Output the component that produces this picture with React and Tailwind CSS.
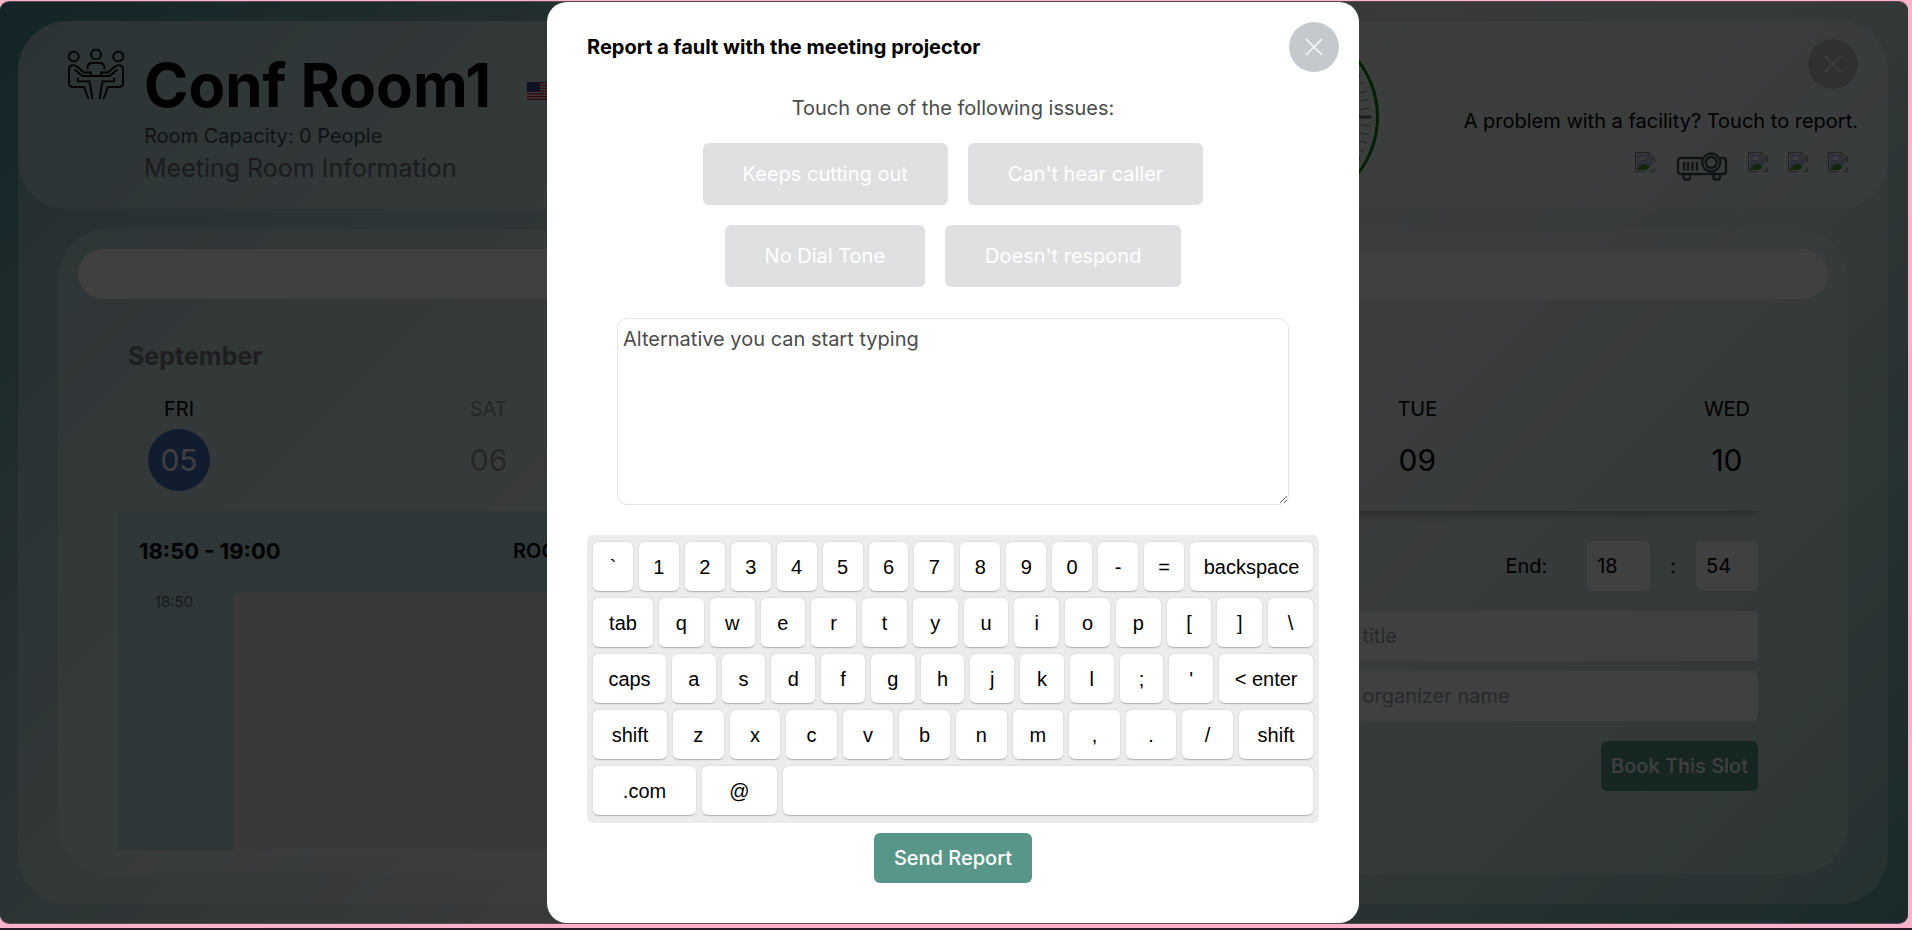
import React from "react";

const DAYS = [
  { name: "FRI", date: "05", state: "selected" },
  { name: "SAT", date: "06", state: "muted" },
  { name: "SUN", date: "07", state: "muted" },
  { name: "MON", date: "08", state: "normal" },
  { name: "TUE", date: "09", state: "normal" },
  { name: "WED", date: "10", state: "normal" },
];

const ISSUES = ["Keeps cutting out", "Can't hear caller", "No Dial Tone", "Doesn't respond"];

const KEY_ROWS = [
  [..."`1234567890-=", ["backspace", "w-[123px]"]],
  [["tab", "w-[60px]"], ..."qwertyuiop[]\\"],
  [["caps", "w-[73px]"], ..."asdfghjkl;'", ["< enter", "w-[94px]"]],
  [["shift", "w-[74px]"], ..."zxcvbnm,./", ["shift", "w-[74px]"]],
  [[".com", "w-[103px]"], ["@", "w-[75px]"], " "],
];

function MeetingIcon() {
  return (
    <svg width="56" height="51" viewBox="0 0 56 51" fill="none" stroke="black" strokeWidth="1.8" className="shrink-0" aria-hidden="true">
      <circle cx="5.8" cy="7.5" r="4.900" />
      <circle cx="28" cy="5.5" r="4.900" />
      <circle cx="50.2" cy="7.5" r="4.900" />
      <path d="M19.500 20.500V19C19.500 16 21.500 14 24.500 14H31.500C34.500 14 36.500 16 36.500 19V20.500" />
      <path d="M6.500 20.500L14.500 27H41.500L49.500 20.500" />
      <path d="M23 27V23.500H16L9 17.500C6 15 1 16 1 20.500V34C1 36.500 2.500 38 5 38H16L20.500 50" />
      <path d="M33 27V23.500H40L47 17.500C50 15 55 16 55 20.500V34C55 36.500 53.500 38 51 38H40L35.500 50" />
      <path d="M10 28.500V32.300H21.500L24.500 50M46 28.500V32.300H34.500L31.500 50" />
    </svg>
  );
}

function FlagIcon() {
  const stripes = [0, 1, 2, 3, 4, 5, 6];
  return (
    <svg width="34" height="18" viewBox="0 0 34 18" className="shrink-0" aria-hidden="true">
      <rect width="34" height="18" fill="#f0f0f0" />
      {stripes.map((n) => (
        <rect key={n} y={n * 2.77} width="34" height="1.39" fill="#c8203c" />
      ))}
      <rect width="13" height="9.7" fill="#3c4080" />
    </svg>
  );
}

function ClockFace() {
  const ticks = Array.from({ length: 60 }, (_, n) => n);
  return (
    <svg width="187" height="186" viewBox="0 0 187 186" className="shrink-0" aria-hidden="true">
      <circle cx="94" cy="93" r="91.500" fill="none" stroke="#008000" strokeWidth="3" />
      {ticks.map((n) => (
        <line
          key={n}
          x1="94"
          x2="94"
          y1="8"
          y2={n % 5 === 0 ? 24 : 19}
          stroke={n % 5 === 0 ? "#707070" : "#8c8c8c"}
          strokeWidth={n % 5 === 0 ? 3 : 1}
          transform={`rotate(${n * 6} 94 93)`}
        />
      ))}
    </svg>
  );
}

function BrokenImageIcon() {
  return (
    <svg width="20" height="20" viewBox="0 0 20 20" aria-hidden="true">
      <path d="M0.500 0.500H14L19.500 6V19.500H0.500Z" fill="#f4f4f4" />
      <path d="M2 2H13V7H18V18H2Z" fill="#b4bee4" />
      <path d="M4 7.500C4 6 5.500 6 6 5.500C7 4 9 4.500 9.500 6C11 6 11 7.500 10 7.500Z" fill="white" />
      <path d="M2 18C4 11.500 11 10 15 15L18 18Z" fill="#48a030" />
      <path d="M9.500 20L20 10V14L14 20Z" fill="#e6e9e8" />
      <path d="M10 19.500H0.500V0.500H14L19.500 6V11M14 0.500V6H19.500M15 19.500H19.500V15" fill="none" stroke="#787878" />
    </svg>
  );
}

function ProjectorIcon() {
  return (
    <svg width="53" height="30" viewBox="-2 0 53 30" fill="none" stroke="#3c4b54" strokeWidth="2.300" aria-hidden="true">
      <path d="M25 6H3.500Q1 6 1 8.500V19.500Q1 22 3.500 22H46.500Q49 22 49 19.500V8.500Q49 6 46.500 6H43" />
      <circle cx="34.200" cy="10.500" r="9" />
      <circle cx="34.200" cy="10.500" r="5.500" />
      <path d="M7 10V18.500M11 10V18.500M15.500 10V18.500M20 10V18.500" />
      <path d="M6.500 22V25.500Q6.500 27.500 8.500 27.500H11Q13 27.500 13 25.500V22M36.500 22V25.500Q36.500 27.500 38.500 27.500H41Q43 27.500 43 25.500V22" />
    </svg>
  );
}

function CloseButton({ label, className }) {
  return (
    <button type="button" aria-label={label} className={`flex size-[50px] shrink-0 items-center justify-center rounded-full ${className}`}>
      <svg width="18" height="18" viewBox="0 0 18 18" stroke="white" strokeWidth="1.300" aria-hidden="true">
        <path d="M1 1L17 17M17 1L1 17" />
      </svg>
    </button>
  );
}

function RoomHeader() {
  return (
    <header className="flex h-[188px] items-start rounded-[50px] bg-white/30 pr-[30px] pl-[50px]">
      <div className="flex flex-1 gap-5">
        <div className="pt-7">
          <MeetingIcon />
        </div>
        <div className="pt-[34px]">
          <div className="flex items-end gap-9">
            <h1 className="text-[60px] leading-[60px] font-bold text-black">Conf Room1</h1>
            <div className="pb-[15px]">
              <FlagIcon />
            </div>
          </div>
          <p className="mt-[6px] text-[20px] leading-[30px] text-[#404c50]">Room Capacity: 0 People</p>
          <p className="mt-[2px] text-[25px] leading-[30px] text-[#707078]">Meeting Room Information</p>
        </div>
      </div>
      <div className="mr-[85px] pt-[3px]">
        <ClockFace />
      </div>
      <div className="flex flex-col items-end pt-[18px]">
        <CloseButton label="Close room" className="bg-[#bcbcc0] opacity-90" />
        <p className="mt-[17px] text-[20px] leading-[30px] text-black">A problem with a facility? Touch to report.</p>
        <div className="mt-4 flex items-start gap-5 pr-[10px]">
          <BrokenImageIcon />
          <ProjectorIcon />
          <BrokenImageIcon />
          <BrokenImageIcon />
          <BrokenImageIcon />
        </div>
      </div>
    </header>
  );
}

const DAY_TEXT = { selected: "text-black", muted: "text-black/35", normal: "text-black" };
const DATE_TEXT = { selected: "bg-[#4470b8] text-white", muted: "text-black/35", normal: "text-black" };

function DayStrip() {
  return (
    <div className="flex justify-between pt-[23px] pr-[10px] pb-5 pl-[30px] shadow-[0_12px_10px_-11px_rgba(0,0,0,0.4)]">
      {DAYS.map((day) => (
        <button type="button" key={day.name} className="flex w-[62px] flex-col items-center gap-[5px]">
          <span className={`text-[20px] leading-[30px] ${DAY_TEXT[day.state]}`}>{day.name}</span>
          <span className={`flex size-[62px] items-center justify-center rounded-full text-[30px] leading-[30px] ${DATE_TEXT[day.state]}`}>
            {day.date}
          </span>
        </button>
      ))}
    </div>
  );
}

function SchedulePanel() {
  return (
    <section className="flex flex-1 flex-col bg-[#bad5dc]">
      <div className="flex h-[81px] items-center pb-[2px] pl-[21px] text-black">
        <h3 className="w-[374px] text-[22px] leading-[30px] font-bold">18:50 - 19:00</h3>
        <span className="text-[20px] leading-[30px] font-semibold">ROOM</span>
      </div>
      <div className="flex flex-1">
        <time className="w-[116px] pr-1 text-center text-[15px] leading-[20px] text-[#606468]">18:50</time>
        <div className="flex-1 rounded-tl-lg border-t border-l border-[#ece8e8] bg-[#e4e4e7]" />
      </div>
    </section>
  );
}

function BookingForm() {
  const field = "h-[50px] rounded-md bg-white px-[10px] text-[20px] text-black placeholder:text-[#9ca3af]";
  return (
    <form className="flex flex-1 flex-col items-end pt-[30px] pr-[10px] pl-5">
      <div className="flex items-center gap-5 text-[20px] text-black">
        <label htmlFor="end-hour" className="mr-5">End:</label>
        <input id="end-hour" className={`w-[63px] ${field}`} defaultValue="18" />
        <span>:</span>
        <input aria-label="End minute" className={`w-[62px] ${field}`} defaultValue="54" />
      </div>
      <input aria-label="Meeting title" placeholder="Meeting title" className={`mt-5 w-[488px] ${field}`} />
      <input aria-label="Meeting organizer name" placeholder="Meeting organizer name" className={`mt-[10px] w-[488px] ${field}`} />
      <button type="button" className="mt-5 h-[50px] rounded-md bg-[#59968a] px-[10px] text-[20px] font-medium text-white">
        Book This Slot
      </button>
    </form>
  );
}

function Keyboard() {
  return (
    <div className="flex w-full flex-col gap-[6px] rounded-md bg-[#ececec] px-[6px] py-[7px] font-['Liberation_Sans',Arial,sans-serif]">
      {KEY_ROWS.map((row, r) => (
        <div key={r} className="flex gap-[6px]">
          {row.map((key, k) => {
            const [label, width] = Array.isArray(key) ? key : [key, "min-w-0 flex-1"];
            return (
              <button
                type="button"
                key={k}
                aria-label={label === " " ? "space" : undefined}
                className={`h-[50px] rounded-md border-b border-[#b5b5b5] bg-white text-[20px] text-black shadow-[0_0_3px_-1px_rgba(0,0,0,0.3)] ${width}`}
              >
                {label}
              </button>
            );
          })}
        </div>
      ))}
    </div>
  );
}

function FaultDialog() {
  return (
    <div className="absolute inset-0 flex items-start justify-center bg-black/75 pr-[2px]">
      <div role="dialog" aria-modal="true" aria-labelledby="fault-title" className="flex w-full max-w-[812px] flex-col items-center rounded-[20px] bg-white px-10 pt-5 pb-10">
        <div className="flex w-full items-center justify-between">
          <h2 id="fault-title" className="text-[20px] leading-[30px] font-bold text-black">
            Report a fault with the meeting projector
          </h2>
          <CloseButton label="Close dialog" className="-mr-5 bg-[#c4c9cd]" />
        </div>
        <p className="mt-[21px] text-[20px] leading-[30px] text-[#4b4b4b]">Touch one of the following issues:</p>
        <div className="mt-5 flex max-w-[560px] flex-wrap justify-center gap-5">
          {ISSUES.map((issue) => (
            <button type="button" key={issue} className="h-[62px] rounded-md bg-[#e0e0e2] px-10 text-[20px] text-white">
              {issue}
            </button>
          ))}
        </div>
        <textarea
          aria-label="Fault description"
          placeholder="Alternative you can start typing"
          className="mt-[31px] h-[187px] w-[672px] max-w-full rounded-[10px] border border-[#e5e5e5] bg-white p-[5px] text-[20px] leading-[30px] text-black placeholder:text-[#4b4b4b]"
        />
        <div className="mt-[30px] w-full">
          <Keyboard />
        </div>
        <button type="button" className="mt-[10px] h-[50px] rounded-md bg-[#59968a] px-5 text-[20px] font-medium text-white">
          Send Report
        </button>
      </div>
    </div>
  );
}

export default function App() {
  return (
    <div className="flex min-h-screen flex-col border-b-2 border-[#2a1a28] bg-[#ffb3cb] pt-px pr-1 pb-1 font-[Inter,sans-serif]">
      <div className="relative flex flex-1 flex-col overflow-hidden rounded-[9px] border-y border-[#57494f] bg-[linear-gradient(135deg,#4f949c_0%,#88b4bc_18%,#e2eae8_50%,#d0e0e2_65%,#66a8a6_100%)] pt-[19px] pr-5 pb-[19px] pl-[18px]">
        <main className="flex flex-1 flex-col rounded-[50px] bg-white/30 pb-[30px]">
          <RoomHeader />
          <div className="mx-10 mt-5 flex flex-1 flex-col rounded-[50px] bg-white/30 pt-5 pb-6">
            <div className="mx-5 h-[50px] rounded-full bg-white" />
            <div className="mr-20 ml-[60px] flex flex-1 flex-col">
              <h2 className="mt-[42px] pl-[10px] text-[25px] leading-[30px] font-bold text-[#7a7a82]">September</h2>
              <DayStrip />
              <div className="flex flex-1">
                <SchedulePanel />
                <BookingForm />
              </div>
            </div>
          </div>
        </main>
        <FaultDialog />
      </div>
    </div>
  );
}
